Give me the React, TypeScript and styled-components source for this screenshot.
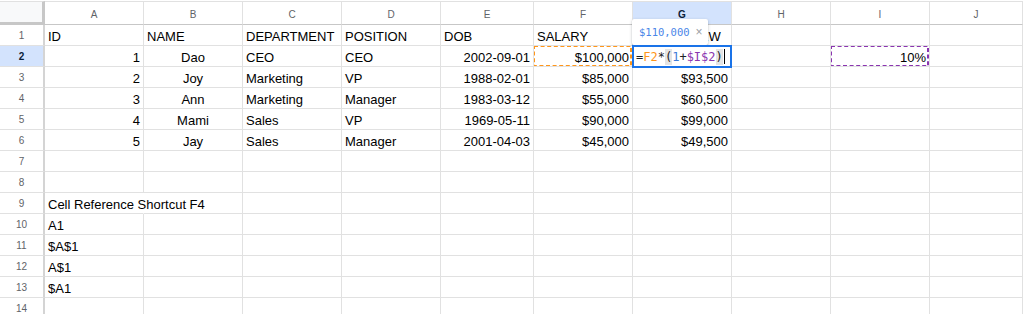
import React from "react";
import styled, { createGlobalStyle, css } from "styled-components";

type Align = "left" | "center" | "right";

interface CellData {
  v: string;
  a?: Align;
  overflow?: boolean;
  mark?: string;
}

const COLS = ["A", "B", "C", "D", "E", "F", "G", "H", "I", "J"];
const SEL_COL = 6;
const SEL_ROW = 2;
const ORANGE = "#ff961a";
const PURPLE = "#8a35b0";

const L = (v: string): CellData => ({ v, a: "left" });
const R = (v: string): CellData => ({ v, a: "right" });
const C = (v: string): CellData => ({ v, a: "center" });

const person = (
  id: string,
  name: string,
  dept: string,
  pos: string,
  dob: string,
  salary: string,
  next: string
): CellData[] => [R(id), C(name), L(dept), L(pos), R(dob), R(salary), R(next)];

const data: Record<number, CellData[]> = {
  1: ["ID", "NAME", "DEPARTMENT", "POSITION", "DOB", "SALARY", "SALARY NEW"].map(L),
  2: [
    ...person("1", "Dao", "CEO", "CEO", "2002-09-01", "$100,000", ""),
    L(""),
    { v: "10%", a: "right", mark: PURPLE },
  ],
  3: person("2", "Joy", "Marketing", "VP", "1988-02-01", "$85,000", "$93,500"),
  4: person("3", "Ann", "Marketing", "Manager", "1983-03-12", "$55,000", "$60,500"),
  5: person("4", "Mami", "Sales", "VP", "1969-05-11", "$90,000", "$99,000"),
  6: person("5", "Jay", "Sales", "Manager", "2001-04-03", "$45,000", "$49,500"),
  9: [{ v: "Cell Reference Shortcut F4", a: "left", overflow: true }],
  10: [L("A1")],
  11: [L("$A$1")],
  12: [L("A$1")],
  13: [L("$A1")],
};
data[2][5] = { ...data[2][5], mark: ORANGE };

const GlobalStyle = createGlobalStyle`
  html, body {
    margin: 0;
    padding: 0;
    background: #ffffff;
    overflow: hidden;
  }
  body {
    font-family: "Liberation Sans", Arial, sans-serif;
  }
`;

const Sheet = styled.div`
  display: grid;
  grid-template-columns: 45px 99px 99px 99px 99px 93px 99px 99px 99px 99px 1fr;
  grid-template-rows: 24px;
  grid-auto-rows: 21px;
  width: 1023px;
  height: 314px;
  padding-top: 1px;
  box-sizing: border-box;
  overflow: hidden;
`;

const Corner = styled.div`
  box-sizing: border-box;
  background: #f8f9fa;
  border-top: 1px solid #e1e1e1;
  border-right: 3px solid #c7c7c7;
  border-bottom: 3px solid #c7c7c7;
`;

const headerText = css<{ $selected?: boolean }>`
  box-sizing: border-box;
  display: flex;
  align-items: center;
  justify-content: center;
  font-family: "Liberation Sans", Arial, sans-serif;
  font-size: 10px;
  color: ${(p) => (p.$selected ? "#0a1d3a" : "#5f6368")};
  font-weight: ${(p) => (p.$selected ? 700 : 400)};
  background: ${(p) => (p.$selected ? "#d3e3fd" : "#ffffff")};
`;

const ColHeader = styled.div<{ $selected?: boolean }>`
  ${headerText};
  border-top: 1px solid #e1e1e1;
  border-right: 1px solid #e1e1e1;
  border-bottom: 1px solid #c7c7c7;
  padding-top: 2px;
`;

const RowHeader = styled.div<{ $selected?: boolean }>`
  ${headerText};
  border-right: 2px solid #d4d4d4;
  border-bottom: 1px solid #e1e1e1;
`;

const Cell = styled.div<{ $align?: Align; $overflow?: boolean }>`
  box-sizing: border-box;
  position: relative;
  display: flex;
  align-items: flex-end;
  justify-content: ${(p) =>
    p.$align === "right" ? "flex-end" : p.$align === "center" ? "center" : "flex-start"};
  padding: 0 3px 1px;
  border-right: 1px solid ${(p) => (p.$overflow ? "transparent" : "#e1e1e1")};
  border-bottom: 1px solid #e1e1e1;
  font-size: 13px;
  line-height: 14px;
  color: #000000;
  white-space: nowrap;
  overflow: ${(p) => (p.$overflow ? "visible" : "hidden")};
`;

// marching-ants frame drawn over a referenced cell
const Ants = styled.svg`
  position: absolute;
  top: -1px;
  left: -1px;
  width: 99px;
  height: 22px;
  overflow: visible;
  pointer-events: none;
`;

const MarchingAnts: React.FC<{ color: string }> = ({ color }) => (
  <Ants viewBox="0 0 99 22">
    <rect
      x="1"
      y="1"
      width="97"
      height="20"
      fill="none"
      stroke={color}
      strokeWidth="2"
      strokeDasharray="4 2.6"
    />
  </Ants>
);

const ActiveCell = styled(Cell)`
  overflow: visible;
  z-index: 2;
`;

const Editor = styled.div`
  position: absolute;
  left: -1px;
  top: -1px;
  width: 100px;
  height: 23px;
  box-sizing: border-box;
  border: 2px solid #1a73e8;
  background: #ffffff;
  display: flex;
  align-items: center;
  padding: 0 2px;
  font-family: "DejaVu Sans Mono", "Liberation Mono", monospace;
  font-size: 12px;
  line-height: 16px;
  white-space: pre;
`;

const Tok = styled.span<{ $c?: string; $paren?: boolean }>`
  color: ${(p) => p.$c ?? "#202124"};
  background: ${(p) => (p.$paren ? "#e4e4e4" : "transparent")};
`;

const Caret = styled.span`
  display: inline-block;
  width: 1px;
  height: 15px;
  margin-left: 1px;
  background: #000000;
`;

const Tooltip = styled.div`
  position: absolute;
  left: -1px;
  top: -27px;
  width: 76px;
  height: 26px;
  box-sizing: border-box;
  display: flex;
  align-items: center;
  gap: 6px;
  padding: 0 0 0 7px;
  background: #ffffff;
  border-radius: 2px;
  box-shadow: 0 1px 3px rgba(60, 64, 67, 0.3), 0 1px 1px rgba(60, 64, 67, 0.15);
  font-family: "DejaVu Sans Mono", "Liberation Mono", monospace;
  font-size: 10.5px;
  color: #4a86e8;

  &::after {
    content: "";
    position: absolute;
    left: 3px;
    bottom: -5px;
    border-left: 5px solid transparent;
    border-right: 5px solid transparent;
    border-top: 5px solid #ffffff;
  }
`;

const Close = styled.span`
  font-family: "Liberation Sans", Arial, sans-serif;
  font-size: 12px;
  color: #9aa0a6;
`;

const FormulaEditor: React.FC = () => (
  <>
    <Tooltip>
      <span>$110,000</span>
      <Close>×</Close>
    </Tooltip>
    <Editor>
      <Tok>=</Tok>
      <Tok $c={ORANGE}>F2</Tok>
      <Tok>*</Tok>
      <Tok $paren>(</Tok>
      <Tok $c="#3d7ad6">1</Tok>
      <Tok>+</Tok>
      <Tok $c={PURPLE}>$I$2</Tok>
      <Tok $paren>)</Tok>
      <Caret />
    </Editor>
  </>
);

export default function App() {
  const rows = Array.from({ length: 14 }, (_, i) => i + 1);
  return (
    <>
      <GlobalStyle />
      <Sheet>
        <Corner />
        {COLS.map((c, i) => (
          <ColHeader key={c} $selected={i === SEL_COL}>
            {c}
          </ColHeader>
        ))}
        {rows.map((r) => (
          <React.Fragment key={r}>
            <RowHeader $selected={r === SEL_ROW}>{r}</RowHeader>
            {COLS.map((c, ci) => {
              if (r === SEL_ROW && ci === SEL_COL) {
                return (
                  <ActiveCell key={c}>
                    <FormulaEditor />
                  </ActiveCell>
                );
              }
              const cell = data[r]?.[ci];
              return (
                <Cell key={c} $align={cell?.a} $overflow={cell?.overflow}>
                  {cell?.v}
                  {cell?.mark && <MarchingAnts color={cell.mark} />}
                </Cell>
              );
            })}
          </React.Fragment>
        ))}
      </Sheet>
    </>
  );
}
